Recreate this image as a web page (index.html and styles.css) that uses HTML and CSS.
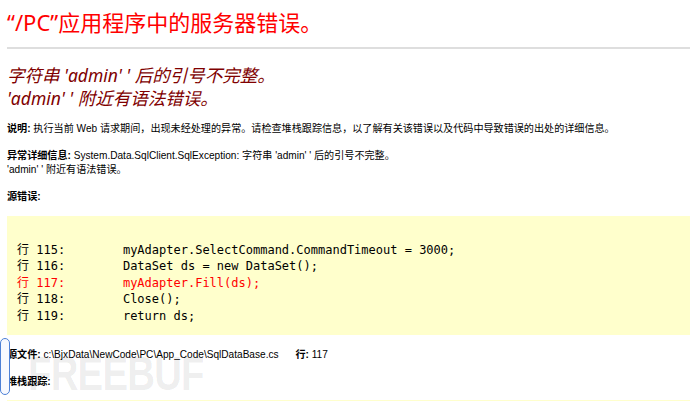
FILE: index.html
```html
<!DOCTYPE html>
<html lang="zh-CN">
<head>
  <meta charset="UTF-8">
  <title>“/PC”应用程序中的服务器错误。</title>
  <link rel="stylesheet" href="styles.css">
</head>
<body>
  <div class="page">
    <h1>“/PC”应用程序中的服务器错误。</h1>
    <hr class="rule">

    <h2><i>字符串 'admin' ' 后的引号不完整。<br>'admin' ' 附近有语法错误。</i></h2>

    <p class="info"><b>说明:</b> 执行当前 Web 请求期间，出现未经处理的异常。请检查堆栈跟踪信息，以了解有关该错误以及代码中导致错误的出处的详细信息。</p>

    <p class="info"><b>异常详细信息:</b> System.Data.SqlClient.SqlException: 字符串 'admin' ' 后的引号不完整。<br>'admin' ' 附近有语法错误。</p>

    <p class="info"><b>源错误:</b></p>

    <!-- source code block, first line left blank like the original page -->
    <div class="code-box">
<pre class="code">

行 115:        myAdapter.SelectCommand.CommandTimeout = 3000;
行 116:        DataSet ds = new DataSet();
<span class="err-line">行 117:        myAdapter.Fill(ds);</span>
行 118:        Close();
行 119:        return ds;</pre>
    </div>

    <p class="info"><b>源文件:</b> c:\BjxData\NewCode\PC\App_Code\SqlDataBase.cs&nbsp;&nbsp;&nbsp;&nbsp;&nbsp; <b>行:</b> 117</p>

    <p class="info"><b>堆栈跟踪:</b></p>

    <div class="code-box stack"></div>
  </div>

  <div class="watermark">FREEBUF</div>
  <div class="side-handle"></div>
</body>
</html>
```

FILE: styles.css
```css
html, body {
  margin: 0;
  padding: 0;
  background-color: white;
  overflow: hidden;
}

body {
  font-family: "Liberation Sans", Arial, "Noto Sans CJK SC", sans-serif;
  color: #000;
}

.page {
  padding: 8px 0 0 7px;
}

h1 {
  margin: 0;
  font-family: "Noto Sans", "Noto Sans CJK SC", sans-serif;
  font-size: 22px;
  line-height: 28px;
  font-weight: normal;
  color: #ff0000;
}

.rule {
  margin: 11px 0 0 0;
  border: 0;
  height: 2px;
  background-color: #dedede;
}

h2 {
  margin: 15px 0 0 0;
  font-family: "Noto Sans", "Noto Sans CJK SC", sans-serif;
  font-size: 17.5px;
  line-height: 22.5px;
  font-weight: normal;
  color: #800000;
}

.info {
  margin: 13px 0 0 0;
  font-size: 10.1px;
  line-height: 14px;
}

.info b {
  font-weight: bold;
}

.code-box {
  margin-top: 12px;
  background-color: #ffffcc;
}

.code {
  margin: 0;
  padding: 9px 0 11px 10px;
  font-family: "DejaVu Sans Mono", "Noto Sans CJK SC", monospace;
  font-size: 12px;
  line-height: 16.5px;
  color: #000;
}

.err-line {
  color: #ff0000;
}

.stack {
  margin-top: 11px;
  height: 20px;
}

.watermark {
  position: absolute;
  left: 28px;
  top: 346px;
  font-family: "Liberation Sans", Arial, sans-serif;
  font-weight: bold;
  font-size: 48px;
  line-height: 56px;
  letter-spacing: -1px;
  color: rgba(0, 0, 0, 0.08);
  transform: scaleX(0.8);
  transform-origin: left top;
  pointer-events: none;
}

.side-handle {
  position: absolute;
  left: 0;
  top: 338px;
  width: 8px;
  height: 55px;
  border: 1.5px solid #4d80d6;
  border-radius: 6px;
  background-color: #f7f9ff;
}
```
